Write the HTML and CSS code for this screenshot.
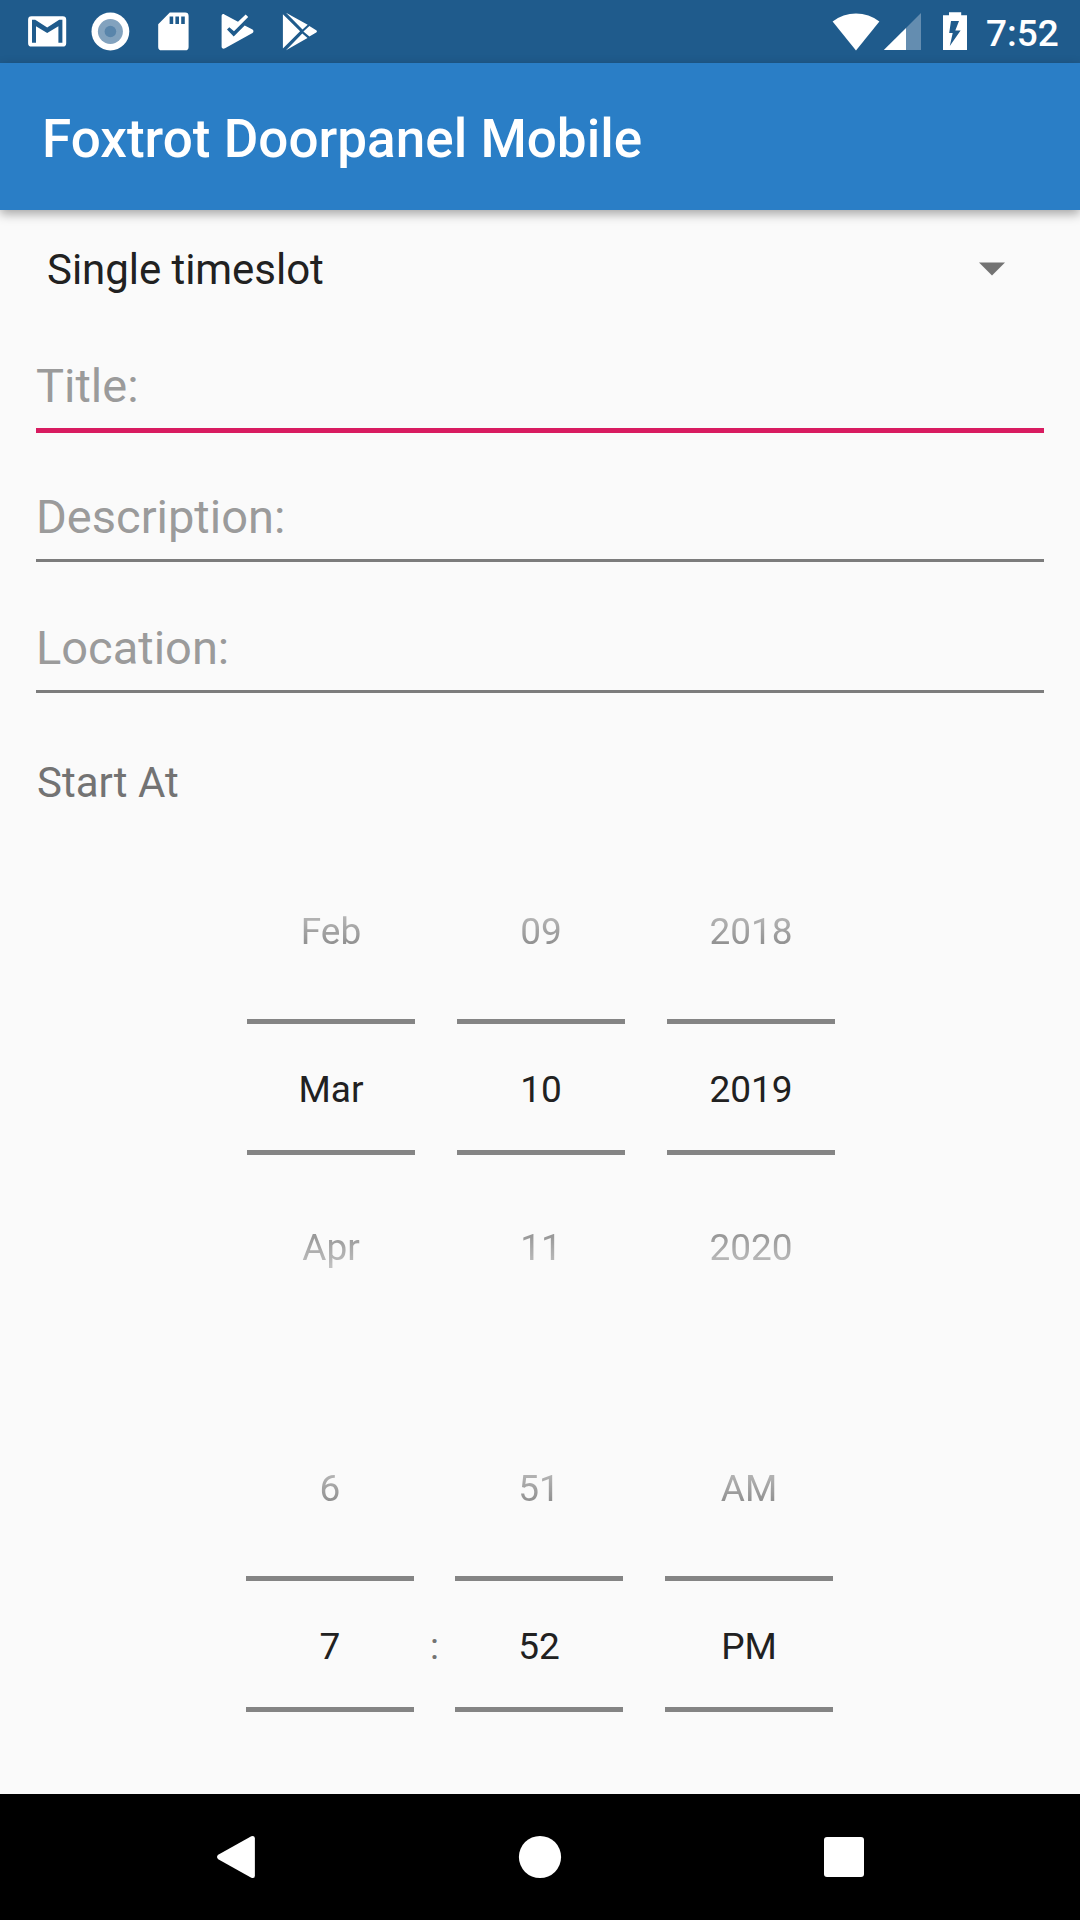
FILE: index.html
```html
<!DOCTYPE html>
<html lang="en">
<head>
<meta charset="utf-8">
<title>Foxtrot Doorpanel Mobile</title>
<link rel="stylesheet" href="styles.css">
</head>
<body>
<div class="screen">
  <div class="status-bar">
    <div class="notifications">
      <svg class="tile" viewBox="16 0 63 63"><path fill="#fff" fill-rule="evenodd" d="M31.500 16.200h31.300a3.400 3.400 0 0 1 3.400 3.400v23.600a3.400 3.400 0 0 1-3.400 3.400H31.500a3.400 3.400 0 0 1-3.400-3.400V19.600a3.400 3.400 0 0 1 3.400-3.400zM32 19.800V42.700h4V26.200l11.200 6.800 11.200-6.800V42.700h4V19.800h-3.200l-12 7.700-12-7.700z"/></svg>
      <svg class="tile" viewBox="79 0 63 63"><circle cx="110.400" cy="31.500" r="18.900" fill="#fff"/><circle cx="110.400" cy="31.500" r="12.500" fill="#82a2be"/><circle cx="110.400" cy="31.500" r="5.800" fill="#5985ab"/></svg>
      <svg class="tile" viewBox="142 0 63 63"><path fill="#fff" fill-rule="evenodd" d="M169.800 12.600h15.400a3.400 3.400 0 0 1 3.400 3.400v30.900a3.400 3.400 0 0 1-3.400 3.400h-23.600a3.400 3.400 0 0 1-3.400-3.400V24.200zM169.600 16.600v7.400h3.600v-7.400zM175.400 16.600v7.400h3.600v-7.400zM181.200 16.600v7.400h3.600v-7.400z"/></svg>
      <svg class="tile" viewBox="205 0 63 63"><path fill="#fff" d="M221.600 16.200c0-1.800 1.200-2.600 2.800-1.800L238 21.700 245.700 14.500 248.200 17 234 31.300 229.300 27.200 227 29.500 233.700 36.400 244.700 25.500 252.500 29.500c1.300.9 1.300 2.700 0 3.600L225 48.300c-1.800.9-3.400.1-3.400-1.500z"/></svg>
      <svg class="tile" viewBox="268 0 63 63"><path fill="#fff" d="M282.900 14.200l17.200 17.100-17.200 17.300zM286 12.800l21.700 11.900-5.200 4.700zM286 50.300l16.300-16.800 5.200 4.500zM309.400 26l6.800 4.200a1.200 1.200 0 0 1 0 2.200l-6.800 4.100-6-5.100z"/></svg>
    </div>
    <div class="system">
      <svg width="52" height="63" viewBox="830 0 52 63"><path fill="#fff" d="M832.600 21.500a38 38 0 0 1 46.800 0L856 50.400z"/></svg>
      <svg width="42" height="63" viewBox="882 0 42 63"><path fill="#648db0" d="M906 28v22h15V12.900z"/><path fill="#fff" d="M883.800 50H906V28z"/></svg>
      <svg width="62" height="63" viewBox="924 0 62 63"><path fill="#fff" fill-rule="evenodd" d="M949 12.300h12.200v2.900h5.800v34.900h-24V15.200h6zM951 21L949.200 33h3.500L949.800 46 960.600 30.600h-5.300L959 21z"/></svg>
      <span class="clock">7:52</span>
    </div>
  </div>
  <header class="app-bar"><h1>Foxtrot Doorpanel Mobile</h1></header>
  <main class="form">
    <div class="spinner">
      <span>Single timeslot</span>
      <svg width="26" height="14" viewBox="0 0 26 14"><path fill="#737373" d="M0 .4h26L13 13.400z"/></svg>
    </div>
    <div class="field focused"><label>Title:</label></div>
    <div class="field"><label>Description:</label></div>
    <div class="field"><label>Location:</label></div>
    <div class="section-label">Start At</div>
    <div class="picker date">
      <div class="wheel"><span class="prev">Feb</span><span class="current">Mar</span><span class="next">Apr</span></div>
      <div class="wheel"><span class="prev">09</span><span class="current">10</span><span class="next">11</span></div>
      <div class="wheel"><span class="prev">2018</span><span class="current">2019</span><span class="next">2020</span></div>
    </div>
    <div class="picker time">
      <div class="wheel"><span class="prev">6</span><span class="current">7</span></div>
      <span class="colon">:</span>
      <div class="wheel"><span class="prev">51</span><span class="current">52</span></div>
      <div class="wheel period"><span class="prev">AM</span><span class="current">PM</span></div>
    </div>
  </main>
  <nav class="nav-bar">
    <svg width="44" height="44" viewBox="0 0 44 44"><path fill="#fff" d="M1.200 19.800L34.300 1.300Q37.900 0 37.900 3.500V40.500Q37.900 44 34.300 42.700L1.200 24.200Q-1.200 22 1.200 19.800z"/></svg>
    <svg width="44" height="44" viewBox="0 0 44 44"><circle cx="22" cy="22" r="21.100" fill="#fff"/></svg>
    <svg width="44" height="44" viewBox="0 0 44 44"><rect x="2" y="2" width="40" height="40" rx="3" fill="#fff"/></svg>
  </nav>
</div>
</body>
</html>
```
FILE: styles.css
```css
* { box-sizing: border-box; }

body {
  margin: 0;
  background: #fafafa;
  font-family: Roboto, "Liberation Sans", sans-serif;
}

svg { display: block; flex: none; }

.screen {
  display: flex;
  flex-direction: column;
  width: 1080px;
  height: 1920px;
  overflow: hidden;
}

.status-bar {
  display: flex;
  flex: none;
  justify-content: space-between;
  height: 63px;
  padding: 0 20px 0 16px;
  background: #1f5b8c;
}

.notifications, .system { display: flex; }

.tile { width: 63px; height: 63px; }

.clock {
  width: 74px;
  padding-top: 2px;
  color: #fff;
  font-size: 37px;
  font-weight: 500;
  line-height: 63px;
  white-space: nowrap;
}

.app-bar {
  flex: none;
  height: 147px;
  padding: 5px 42px 0;
  background: #2a7ec6;
  box-shadow: 0 4px 10px rgba(0, 0, 0, .34);
}

.app-bar h1 {
  margin: 0;
  color: #fff;
  font-size: 53px;
  font-weight: 500;
  letter-spacing: .03px;
  line-height: 142px;
}

.form { flex: 1; min-height: 0; padding: 0 36px; }

.spinner {
  display: flex;
  align-items: center;
  justify-content: space-between;
  height: 120px;
  padding: 0 39.5px 2px 11px;
  color: #212121;
  font-size: 42px;
  letter-spacing: -.05px;
}

.field { height: 131px; padding-top: 14px; }

.field label {
  display: block;
  height: 87px;
  border-bottom: 3px solid #7c7c7c;
  color: #9b9b9b;
  font-size: 47px;
  line-height: 84px;
}

.field.focused label { height: 89px; border-bottom: 5px solid #d81b60; }

.section-label {
  height: 119px;
  padding-left: 1px;
  color: #737373;
  font-size: 42px;
  line-height: 119px;
}

.picker {
  display: flex;
  color: #212121;
  font-size: 37px;
  text-align: center;
}

.picker.date { gap: 42px; padding-left: 211px; }
.picker.time { margin-top: 59px; padding-left: 210px; }

.wheel { display: flex; flex-direction: column; width: 168px; }
.wheel.period { margin-left: 42px; }

.prev {
  height: 177px;
  padding-top: 2px;
  line-height: 175px;
  -webkit-mask-image: linear-gradient(transparent 22px, #000 188px);
  mask-image: linear-gradient(transparent 22px, #000 188px);
}

.current {
  height: 136px;
  padding-top: 5px;
  border-top: 5px solid #848484;
  border-bottom: 5px solid #848484;
  line-height: 121px;
}

.next {
  height: 185px;
  line-height: 185px;
  -webkit-mask-image: linear-gradient(#000 -11px, transparent 155px);
  mask-image: linear-gradient(#000 -11px, transparent 155px);
}

.colon {
  width: 41px;
  padding-top: 187px;
  color: #737373;
  line-height: 121px;
}

.nav-bar {
  display: flex;
  flex: none;
  align-items: center;
  justify-content: space-between;
  height: 126px;
  padding: 0 214px 0 217px;
  background: #000;
}

.nav-bar svg:nth-child(2) { margin-right: 3px; }
```
